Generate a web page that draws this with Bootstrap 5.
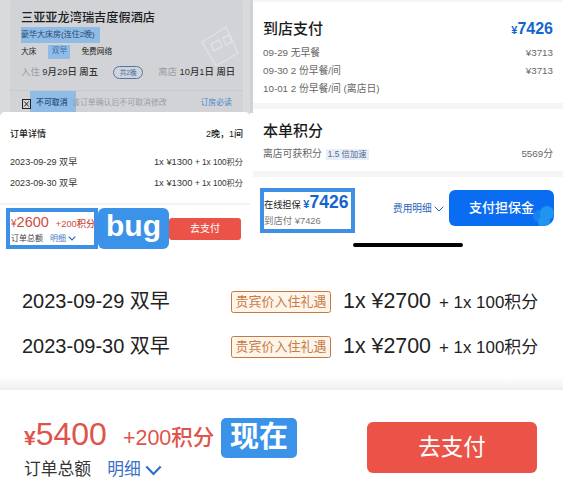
<!DOCTYPE html>
<html lang="zh"><head><meta charset="utf-8"><title>Bug report</title>
<link href="https://cdn.jsdelivr.net/npm/bootstrap@5.3.0/dist/css/bootstrap.min.css" rel="stylesheet">
<style>
html,body{margin:0;background:#fff;overflow:hidden}
body{width:563px;height:500px;font-family:"Liberation Sans","Noto Sans CJK SC",sans-serif;color:#222;line-height:1.2}
.top-row{height:260px}
.pane-l{width:250px;height:260px;position:relative;overflow:hidden;background:#fff}
.pane-r{width:313px;height:260px;overflow:hidden;position:relative}
.dim{height:116px;background:#d9dadb;padding:0 7px 0 10px}
.hotel{height:116px;background:#d1d3d6;border-radius:4px;padding:10px 11px 0 11px;position:relative}
.wm{position:absolute;left:189px;top:24px}
.hname{font-size:12.2px;font-weight:500;color:#1d1d1f;line-height:16px}
.mk{background:#8fbce6}
.hroom{font-size:8px;line-height:16px;margin:1px 0 0 0;width:79px;color:#2b4a6e;white-space:nowrap}
.hfac{font-size:7.7px;line-height:14px;height:14px;color:#222;margin-top:2px}
.hfac .mk{width:22px;height:14px;text-align:center;color:#3f6da5;margin:0 11px 0 12px;display:block;line-height:11px}
.hdate{font-size:9.4px;margin-top:6px;line-height:14px;font-weight:500;color:#333;white-space:nowrap;height:14px}
.hdate span{flex:none}
.hdate i{font-style:normal;color:#9a9da1;font-weight:400}
.pill{border:1px solid #4d76ad;color:#3c6cab;border-radius:7px;font-size:6.5px;width:30px;height:13px;line-height:11px;text-align:center;font-weight:400;margin:0 15px 0 15px}
.hline{height:1px;background:#c8cacd;margin:11px -11px 0}
.hnote{font-size:7.9px;line-height:14px;height:22px;color:#9a9da1;white-space:nowrap}
.hnote .mk{width:46px;height:22px;display:block;margin-left:-1px;color:#2a4c78;padding-top:5px;padding-left:6px;margin-right:-4px;flex:none;font-weight:500}
.nt{padding-top:5px;position:relative}
.xbox{width:9px;height:10px;margin-top:8px;position:relative;z-index:1;margin-left:1px;flex:none}
.rd{color:#4d85c9}
.sheet{position:absolute;left:0;right:0;top:112px;bottom:0;background:#fff;border-radius:5px 5px 0 0}
.s-head{font-size:9px;font-weight:500;padding:17px 7px 0 10px;line-height:11px}
.s-row{font-size:9.1px;padding:0 7px 0 10px;line-height:12px;color:#333;white-space:nowrap}
.s-row b{font-weight:400;font-size:9.4px}
.s-row small{font-size:8.2px}
.r1{margin-top:16px}.r2{margin-top:8px}
.s-sep{height:2px;background:#f3f3f3;margin-top:13px}
.s-foot{position:relative;height:46px;padding-left:6px;padding-top:3px}
.outline-b{border:4px solid #3d90e6;width:92px;height:41px;padding:2px 0 0 1px;background:#fff}
.prc{font-size:10px;color:#cd4c42;line-height:17px;white-space:nowrap;font-weight:500}
.prc b{font-size:14.5px;font-weight:500}
.prc em{font-style:normal;font-size:9.3px;margin-left:7px}
.sub{font-size:8px;line-height:11px;color:#444;white-space:nowrap}
.lnk{color:#4677c4;margin-left:7px}
.tag-bug{background:#3a93e8;color:#fff;font-size:30px;font-weight:700;width:71px;height:41px;border-radius:6px;line-height:36px;text-align:center;position:absolute;left:98px;top:3px;font-family:"Liberation Sans",sans-serif}
.btn-pay1{background:#ec5348;color:#fff;font-size:10px;width:72px;height:22px;border-radius:3px;line-height:22px;text-align:center;position:absolute;left:169px;top:13px;padding:0;border:0}
.edge{position:absolute;left:0;top:0;width:3px;height:113px;background:#cfd1d3}
.r-top{height:2px;background:#f5f5f5}
.r-sec1{height:101px;padding:17px 10px 0 13px}
.rh{font-size:15px;font-weight:500;color:#1c1c1c;line-height:20px}
.rp{color:#1466cc;font-size:11px;font-weight:700;line-height:20px}
.rp b{font-size:16px;font-weight:700}
.r-li{font-size:9.8px;line-height:18px;color:#666;white-space:nowrap}
.r-sep{height:6px;background:#f5f5f5;margin-left:3px}
.r-sec2{height:62px;padding:12px 10px 0 13px}
.multi{background:#e6edfb;color:#5a6b87;font-size:8.3px;padding:0 2px;margin-left:4px;line-height:11px;display:inline-block}
.r-foot{position:relative;height:60px}
.outline-c{border:4px solid #3d90e6;width:95px;height:45px;position:absolute;left:10px;top:11px;font-size:9.2px;background:#fff;white-space:nowrap}
.oc1{height:20px;line-height:21px;color:#222}
.oc2{margin-top:2px;color:#777;line-height:13px;font-size:9.4px}
.outline-c b{color:#1466cc;font-size:17.5px;font-weight:700}
.outline-c u{text-decoration:none;color:#1466cc;font-size:11px;font-weight:700}
.fee{position:absolute;left:143px;top:25px;font-size:9.7px;color:#2a64b8;line-height:14px;white-space:nowrap}
.btn-pay2{position:absolute;left:199px;top:13px;width:105px;height:36px;border-radius:6px 6px 10px 6px;background:#0a6cf0;color:#fff;font-size:13px;font-weight:500;padding:0;border:0;text-align:center;line-height:36px;overflow:hidden}
.btn-pay2 span{position:relative;z-index:1}
.btn-pay2 svg{position:absolute;right:0;bottom:0}
.homebar{position:absolute;left:103px;top:243px;width:110px;height:4px;border-radius:2px;background:#000}
.big-rows{height:117px;padding:28px 23px 0 22px}
.big-row{height:45px;font-size:20px;line-height:26px;color:#222;white-space:nowrap}
.dt{width:209px}
.perk{width:100px;height:22px;border:1px solid #c9773f;background:#fdf4ea;color:#c97b45;border-radius:2.5px;font-size:13px;line-height:20px;text-align:center;margin-right:12px;margin-top:3px}
.amt{font-size:21.4px}
.amt small{font-size:16.9px;margin-left:8px}
.foot-sh{height:13px;background:linear-gradient(#fff,#eee)}
.bot{height:110px;position:relative;padding:0 26px 0 24px}
.bp{font-size:21px;color:#e0534a;line-height:36px;padding-top:26px;white-space:nowrap;font-weight:700}
.bp b{font-size:32px;font-weight:500}
.bp em{font-style:normal;font-size:21.5px;margin-left:16px;font-weight:500}
.bs{font-size:16.8px;line-height:24px;color:#333;margin-top:2px}
.bs .lnk{margin-left:16px;color:#3b6fc8}
.tag-now{position:absolute;left:221px;top:28px;width:76px;height:40px;background:#3a93e8;color:#fff;border-radius:5px;font-size:29px;font-weight:700;line-height:39px;text-align:center}
.btn-pay3{width:170px;height:51px;background:#ec5348;color:#fff;font-size:22.5px;border:0;border-radius:6px;margin-top:32px;padding:0}
</style></head><body>
<div class="d-flex top-row">
 <div class="pane-l">
  <div class="dim"><div class="hotel">
   <svg class="wm" width="42" height="46" viewBox="0 0 42 46"><path d="M3 18 27 3l12 26-22 13zM12 20l8-4 3 7-8 4zM24 14l6-3 3 7-6 3z" fill="none" stroke="#dfe1e3" stroke-width="1.4"/></svg>
   <div class="hname">三亚亚龙湾瑞吉度假酒店</div>
   <div class="hroom mk">豪华大床房(连住2晚)</div>
   <div class="hfac d-flex"><span>大床</span><span class="mk">双早</span><span>免费网络</span></div>
   <div class="hdate d-flex align-items-center"><span><i>入住</i> 9月29日 周五</span><span class="pill">共2晚</span><span><i>离店</i> 10月1日 周日</span></div>
   <div class="hline"></div>
   <div class="hnote d-flex"><svg class="xbox" viewBox="0 0 9 10"><rect x=".5" y=".5" width="8" height="9" fill="none" stroke="#222"/><path d="M2.3 2.6 6.7 7.4M6.7 2.6 2.3 7.4" stroke="#222"/></svg><span class="mk">不可取消</span><span class="nt">该订单确认后不可取消修改</span><span class="ms-auto nt rd">订房必读</span></div>
  </div></div>
  <div class="sheet">
   <div class="s-head d-flex justify-content-between"><span>订单详情</span><span>2晚，1间</span></div>
   <div class="s-row r1 d-flex justify-content-between"><span>2023-09-29 双早</span><span><b>1x ¥1300</b> <small>+ 1x 100积分</small></span></div>
   <div class="s-row r2 d-flex justify-content-between"><span>2023-09-30 双早</span><span><b>1x ¥1300</b> <small>+ 1x 100积分</small></span></div>
   <div class="s-sep"></div>
   <div class="s-foot">
    <div class="outline-b"><div class="prc">¥<b>2600</b><em>+200积分</em></div><div class="sub">订单总额<span class="lnk">明细 <svg width="8" height="5" viewBox="0 0 8 5"><path d="M.7.7 4 4l3.3-3.3" fill="none" stroke="#2f65b8" stroke-width="1.1"/></svg></span></div></div>
    <div class="tag-bug">bug</div>
    <button class="btn-pay1">去支付</button>
   </div>
  </div>
 </div>
 <div class="pane-r">
  <div class="edge"></div>
  <div class="r-top"></div>
  <div class="r-sec1">
   <div class="d-flex justify-content-between"><span class="rh">到店支付</span><span class="rp">¥<b>7426</b></span></div>
   <div class="r-li d-flex justify-content-between mt-1"><span>09-29 无早餐</span><span>¥3713</span></div>
   <div class="r-li d-flex justify-content-between"><span>09-30 2 份早餐/间</span><span>¥3713</span></div>
   <div class="r-li">10-01 2 份早餐/间 (离店日)</div>
  </div>
  <div class="r-sep"></div>
  <div class="r-sec2">
   <div class="rh">本单积分</div>
   <div class="r-li d-flex justify-content-between mt-1"><span>离店可获积分<span class="multi">1.5 倍加速</span></span><span>5569分</span></div>
  </div>
  <div class="r-sep"></div>
  <div class="r-foot">
   <div class="outline-c"><div class="oc1">在线担保 <u>¥</u><b>7426</b></div><div class="oc2">到店付 ¥7426</div></div>
   <div class="fee">费用明细 <svg width="10" height="6" viewBox="0 0 10 6"><path d="M.7.7 5 5 9.3.7" fill="none" stroke="#2a64b8" stroke-width="1"/></svg></div>
   <button class="btn-pay2"><svg width="24" height="24" viewBox="0 0 24 24"><circle cx="9" cy="14" r="6" fill="#1a82ee"/><circle cx="17" cy="11" r="7" fill="#1f95f0"/><circle cx="14" cy="20" r="6" fill="#1f95f0"/></svg><span>支付担保金</span></button>
  </div>
  <div class="homebar"></div>
 </div>
</div>
<div class="big-rows">
 <div class="big-row d-flex"><span class="dt">2023-09-29 双早</span><span class="perk">贵宾价入住礼遇</span><span class="amt">1x ¥2700<small>+ 1x 100积分</small></span></div>
 <div class="big-row d-flex"><span class="dt">2023-09-30 双早</span><span class="perk">贵宾价入住礼遇</span><span class="amt">1x ¥2700<small>+ 1x 100积分</small></span></div>
</div>
<div class="foot-sh"></div>
<div class="bot d-flex justify-content-between">
 <div><div class="bp">¥<b>5400</b><em>+200积分</em></div><div class="bs">订单总额<span class="lnk">明细 <svg width="17" height="11" viewBox="0 0 17 11"><path d="M1.3 1.5 8.5 9l7.2-7.5" fill="none" stroke="#2f6fc8" stroke-width="2.2"/></svg></span></div></div>
 <div class="tag-now">现在</div>
 <button class="btn-pay3">去支付</button>
</div>
</body></html>
